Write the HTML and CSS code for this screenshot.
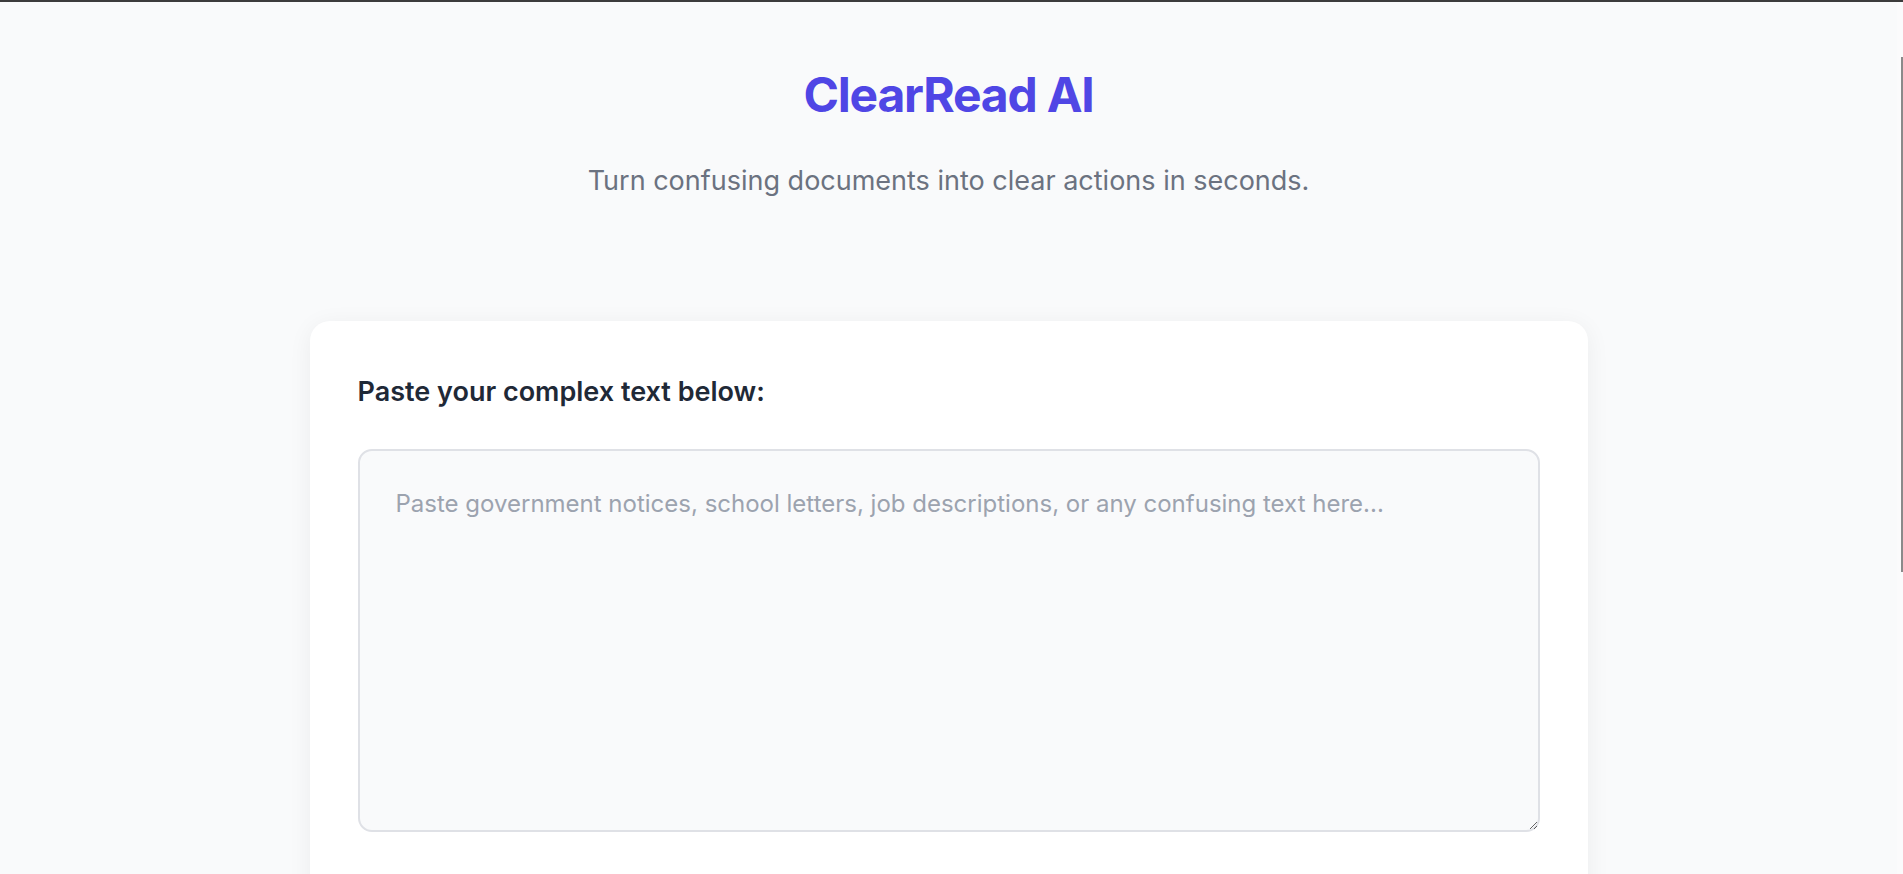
FILE: index.html
```html
<!DOCTYPE html>
<html lang="en">
<head>
<meta charset="utf-8">
<title>ClearRead AI</title>
<link rel="stylesheet" href="styles.css">
</head>
<body>
<div class="page">
  <header class="hero">
    <h1 class="hero-title">ClearRead AI</h1>
    <p class="hero-subtitle">Turn confusing documents into clear actions in seconds.</p>
  </header>
  <main class="card">
    <label class="field-label" for="input-text">Paste your complex text below:</label>
    <textarea id="input-text" class="field-input" placeholder="Paste government notices, school letters, job descriptions, or any confusing text here..."></textarea>
  </main>
</div>
<div class="rail"><div class="rail-thumb"></div></div>
</body>
</html>
```

FILE: styles.css
```css
html {
  scrollbar-width: none;
}
html::-webkit-scrollbar {
  width: 0;
}
body {
  margin: 0;
  background: #f9fafb;
  border-top: 2px solid #3c3c3c;
  font-family: Inter, "Noto Sans", "Liberation Sans", sans-serif;
  color: #1f2937;
  display: flex;
  min-height: 1400px;
}
.page {
  flex: 1;
  display: flex;
  flex-direction: column;
  align-items: center;
  padding: 63px 0 80px;
}
.rail {
  width: 6px;
  background: #fbfbfc;
  display: flex;
  flex-direction: column;
  align-items: flex-end;
}
.rail-thumb {
  width: 2px;
  height: 515px;
  margin-top: 55px;
  background: #8a8a8a;
}
.hero {
  text-align: center;
  margin-bottom: 122px;
}
.hero-title {
  margin: 0;
  font-size: 48px;
  line-height: 60px;
  font-weight: 700;
  letter-spacing: -0.025em;
  color: #4f46e5;
}
.hero-subtitle {
  margin: 37px 0 0;
  font-size: 27px;
  line-height: 37px;
  color: #6b7280;
}
.card {
  box-sizing: border-box;
  width: 1278px;
  background: #ffffff;
  border-radius: 20px;
  padding: 51px 48px 140px;
  box-shadow: 0 4px 24px rgba(17, 24, 39, 0.06);
  display: flex;
  flex-direction: column;
}
.field-label {
  font-size: 27px;
  line-height: 39px;
  font-weight: 600;
  color: #1f2937;
  margin-bottom: 38px;
}
.field-input {
  box-sizing: border-box;
  height: 383px;
  width: 100%;
  padding: 35px 36px;
  border: 2px solid #dfe1e6;
  border-radius: 14px;
  background: #f9fafb;
  font-family: Inter, "Noto Sans", "Liberation Sans", sans-serif;
  font-size: 24px;
  line-height: 36px;
  color: #1f2937;
  resize: vertical;
  outline: none;
}
.field-input::placeholder {
  color: #9ca3af;
}
```
